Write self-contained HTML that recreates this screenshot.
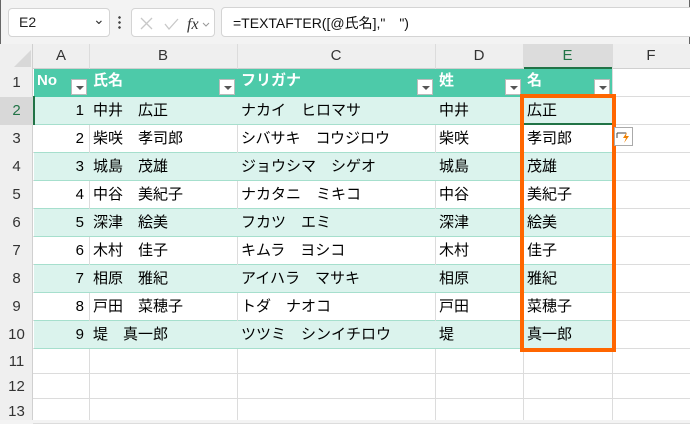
<!DOCTYPE html>
<html><head><meta charset="utf-8"><style>
*{margin:0;padding:0;box-sizing:border-box}
body{width:690px;height:420px;overflow:hidden;background:#f3f3f3;font-family:"Liberation Sans","Noto Sans CJK JP",sans-serif;position:relative}
.a{position:absolute}
.box{position:absolute;background:#fff;border:1px solid #d4d4d4;border-radius:4px}
.t{position:absolute;font-size:15px;color:#000;white-space:pre;line-height:28px}
.hd{position:absolute;font-size:15px;color:#333;text-align:center;line-height:24px;top:44px;height:25px}
.rn{position:absolute;left:0;width:33px;text-align:center;font-size:15px;color:#333}
.dd{position:absolute;width:16px;height:16px;background:#fff;border:1px solid #bbb}
.dd:after{content:"";position:absolute;left:4px;top:6px;border-left:4px solid transparent;border-right:4px solid transparent;border-top:4px solid #555}
</style></head><body>
<div class="a" style="left:0;top:0;width:690px;height:420px;border:1px solid #666;border-top:none"></div>
<div class="box" style="left:8px;top:8px;width:102px;height:29px"><span class="a" style="left:10px;top:5px;font-size:14px;color:#222">E2</span><span class="a" style="left:84px;top:2px;font-size:14px;color:#333">⌄</span></div>
<div class="a" style="left:118px;top:15px;width:3px;height:14px;background:radial-gradient(circle,#444 1.2px,transparent 1.4px) 0 0/3px 5px"></div>
<div class="box" style="left:131px;top:8px;width:84px;height:29px">
<svg class="a" style="left:6px;top:6px" width="80" height="18"><path d="M3 3l11 11M14 3L3 14" stroke="#c8c8c8" stroke-width="1.3" fill="none"/><path d="M27 9l4 5 9-10" stroke="#c8c8c8" stroke-width="1.3" fill="none"/><text x="49" y="14" font-family="Liberation Serif" font-style="italic" font-size="16" fill="#333">fx</text><path d="M65 8l3 3 3-3" stroke="#999" fill="none"/></svg></div>
<div class="box" style="left:221px;top:7px;width:470px;height:30px;border-radius:4px 0 0 4px"><span class="a" style="left:11px;top:5px;font-size:14px;color:#111">=TEXTAFTER([@氏名],"　")</span></div>
<div class="a" style="left:0;top:44px;width:690px;height:376px;background:#fff"></div>
<div class="a" style="left:0;top:44px;width:690px;height:25px;background:#efefef;border-bottom:1px solid #d0d0d0"></div>
<div class="a" style="left:0;top:44px;width:33px;height:376px;background:#efefef;border-right:1px solid #d0d0d0"></div>
<div class="a" style="left:523px;top:44px;width:89px;height:25px;background:#dcdcdc;border-bottom:2px solid #217346"></div>
<svg class="a" style="left:14px;top:50px" width="18" height="18"><path d="M17 0V17H0z" fill="#d8d8d8"/></svg>
<div class="hd" style="left:33px;width:56px">A</div><div class="hd" style="left:89px;width:148px">B</div><div class="hd" style="left:237px;width:198px">C</div><div class="hd" style="left:435px;width:88px">D</div><div class="hd" style="left:523px;width:89px;color:#217346">E</div><div class="hd" style="left:612px;width:78px">F</div>
<div id="g"></div>
<script>
var cols=[33,89,237,435,523,612,690];
var h='';
for(var i=1;i<cols.length-1;i++){h+='<div class="a" style="left:'+cols[i]+'px;top:44px;width:1px;height:376px;background:#dcdcdc"></div>';}
var tops=[69];for(var r=1;r<10;r++)tops.push(69+28*r);tops.push(349,374,399,424);
var data=[["No","氏名","フリガナ","姓","名"],["1","中井　広正","ナカイ　ヒロマサ","中井","広正"],["2","柴咲　孝司郎","シバサキ　コウジロウ","柴咲","孝司郎"],["3","城島　茂雄","ジョウシマ　シゲオ","城島","茂雄"],["4","中谷　美紀子","ナカタニ　ミキコ","中谷","美紀子"],["5","深津　絵美","フカツ　エミ","深津","絵美"],["6","木村　佳子","キムラ　ヨシコ","木村","佳子"],["7","相原　雅紀","アイハラ　マサキ","相原","雅紀"],["8","戸田　菜穂子","トダ　ナオコ","戸田","菜穂子"],["9","堤　真一郎","ツツミ　シンイチロウ","堤","真一郎"]];
for(var r=0;r<13;r++){var y=tops[r],hh=tops[r+1]-y;
 h+='<div class="a" style="left:33px;top:'+(y+hh-1)+'px;width:657px;height:1px;background:#dcdcdc"></div>';
 h+='<div class="rn" style="top:'+y+'px;height:'+hh+'px;line-height:'+hh+'px;'+(r==1?'background:#d8d8d8;color:#217346;':'')+'">'+(r+1)+'</div>';
 if(r<10){var bg=r==0?'#4dcaa9':(r%2==1?'#dbf3ed':'#fff');
  h+='<div class="a" style="left:34px;top:'+y+'px;width:578px;height:'+hh+'px;background:'+bg+';border-bottom:1px solid '+(r==0?'#4dcaa9':'#a6dfcd')+'"></div>';
  if(r>0&&r%2==0){for(var i=1;i<5;i++)h+='<div class="a" style="left:'+cols[i]+'px;top:'+y+'px;width:1px;height:28px;background:#dcdcdc"></div>';}
  for(var c=0;c<5;c++){var x=cols[c];var d=data[r][c];
   if(r==0){h+='<div class="t" style="left:'+(x+4)+'px;top:'+(y-2)+'px;color:#fff;font-weight:bold">'+d+'</div>';
    h+='<div class="dd" style="left:'+(cols[c+1]-18)+'px;top:'+(y+10)+'px"></div>';}
   else if(c==0)h+='<div class="t" style="left:'+x+'px;width:51px;text-align:right;top:'+y+'px">'+d+'</div>';
   else h+='<div class="t" style="left:'+(x+4)+'px;top:'+y+'px">'+d+'</div>';}
 }}
h+='<div class="a" style="left:33px;top:96px;width:2px;height:29px;background:#217346"></div>';
h+='<div class="a" style="left:523px;top:123px;width:89px;height:2px;background:#217346"></div>';
h+='<div class="a" style="left:520px;top:94px;width:96px;height:258px;border:4px solid #ff6600"></div>';
h+='<div class="a" style="left:614px;top:127px;width:19px;height:19px;border:1px solid #aaa;background:#fff"><svg width="17" height="17"><path d="M2 5h9M2 5v5" stroke="#444" fill="none"/><path d="M12 4l-4 6h3l-2 5 5-7h-3z" fill="#f08000"/></svg></div>';
document.getElementById('g').innerHTML=h;
</script>
</body></html>
